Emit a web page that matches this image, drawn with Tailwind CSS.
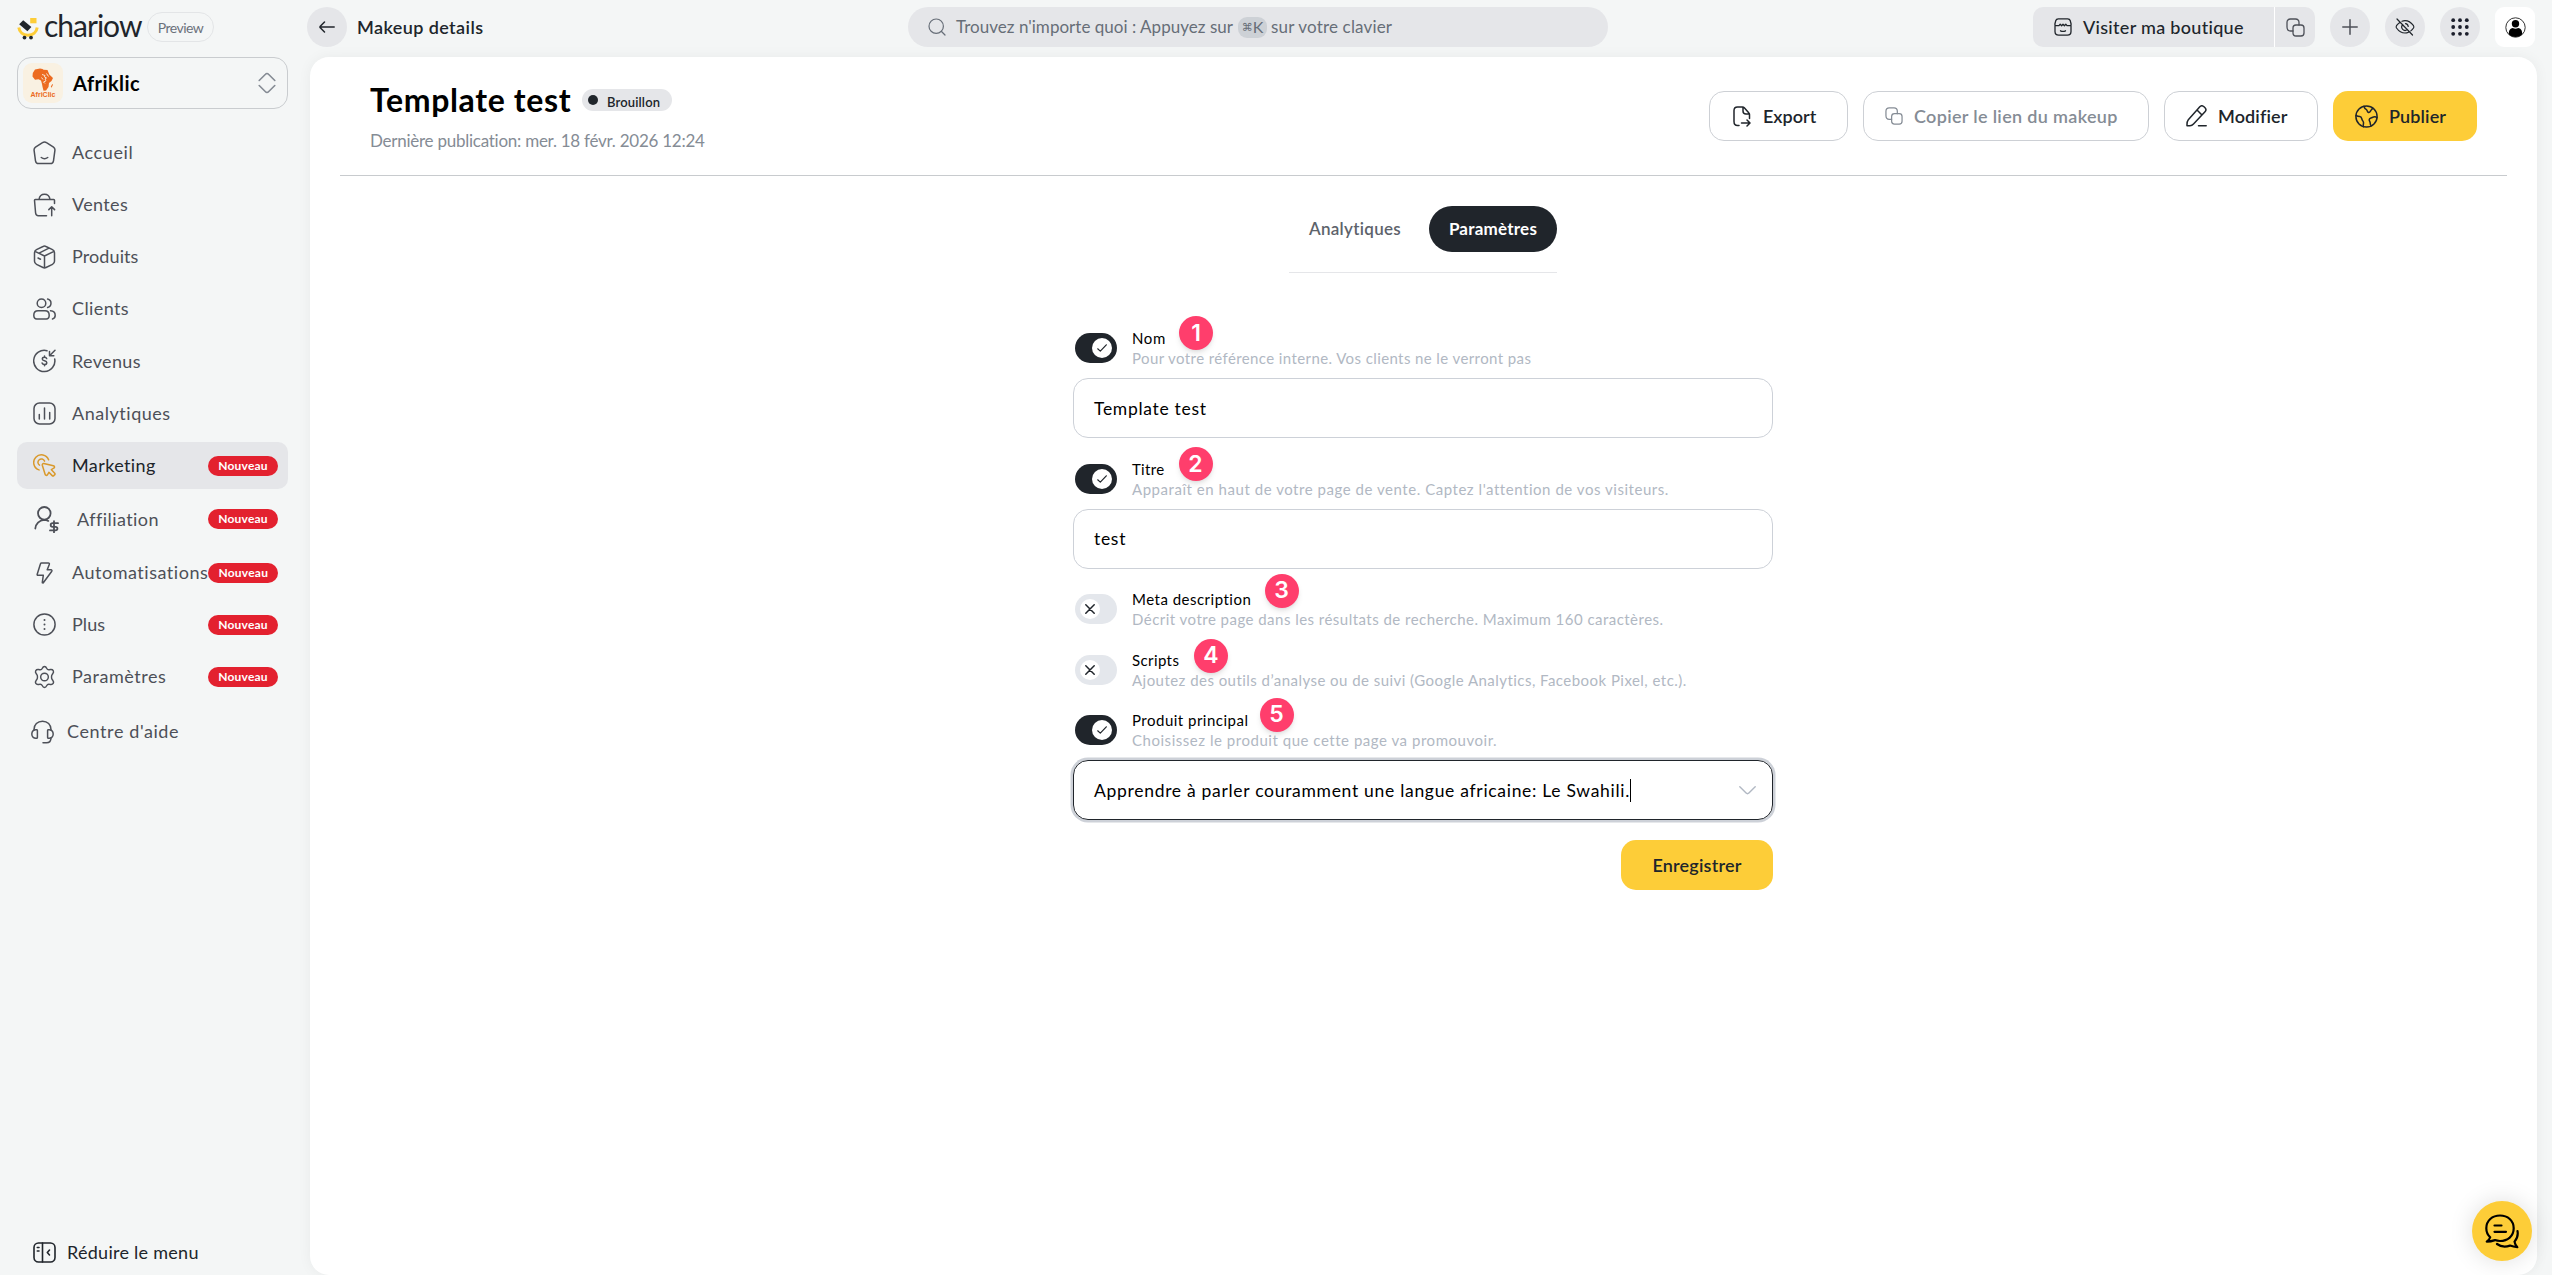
<!DOCTYPE html>
<html lang="fr">

<head>
    <meta charset="UTF-8">
    <meta name="viewport" content="width=device-width, initial-scale=1.0">
    <title>Makeup details - Chariow</title>
    <script src="https://cdn.jsdelivr.net/npm/@tailwindcss/browser@4"></script>
</head>

<body class="bg-[#f4f6f6] h-screen overflow-hidden flex font-['Lato','Noto_Sans',sans-serif] text-[#20252b] whitespace-nowrap">

    <!-- Sidebar -->
    <aside class="w-[307px] shrink-0 flex flex-col pl-[17px] pr-[19px]">
        <div class="h-[57px] pt-[12px] flex items-start">
            <svg class="w-[22px] h-[24px] mt-[5px] shrink-0" viewBox="0 0 22 24" fill="none">
                <path d="M1.8 10.5c.6 4.600 4.300 7.800 9.200 7.800s8.600-3.200 9.200-7.800" stroke="#fdcd38" stroke-width="3" />
                <path d="M6.200 3.200l8.200 6.800-4 4.300-8.200-7z" fill="#20252b" />
                <rect x="13.200" y="1" width="6.300" height="5.300" fill="#fdcd38" />
                <circle cx="7.500" cy="20.600" r="1.900" fill="#20252b" />
                <circle cx="14" cy="20.600" r="1.900" fill="#20252b" />
            </svg>
            <span class="ml-[5px] w-[98px] text-[30px] leading-[30px] tracking-[-1px] -mt-[2px]">chariow</span>
            <span class="ml-[5px] w-[67px] h-[30px] rounded-full border border-[#e3e5e7] flex items-center justify-center text-[14px] tracking-[-0.5px] text-[#6b717b]">Preview</span>
        </div>

        <div class="h-[52px] border border-[#c9cccf] rounded-[14px] flex items-center pl-[5px] pr-[11px]">
            <div class="w-[40px] h-[40px] rounded-[9px] bg-[#f9f1e2] flex flex-col items-center pt-[5px]">
                <svg class="w-[22px] h-[23px] shrink-0" viewBox="0 0 22 23" fill="#ec6b21">
                    <path d="M3 1.500L8 .500l2.500.500 1 .800 4 .200 1.800 4.500L21 10l-1.500 3-2.500 2-.500 4-2.500 3.500-2.500.300-1-4-.500-2.800-1-3.500-2.500-1.200-3.500.500L.500 8.500.800 5z" />
                    <path d="M10 6.500l3 1-.500 1.500 2 1-1.500 1 1 1.800-2.500 1.200 1.500 1.500M14.500 5.500l2 3M9.500 9.500l1.500 2" stroke="#f9f1e2" stroke-width=".9" fill="none" />
                    <path d="M20.300 16l.700.800-1.500 3-.700-1z" />
                </svg>
                <span class="text-[7px] leading-[8px] font-bold text-[#ec6b21] font-['Liberation_Sans',sans-serif]">AfriClic</span>
            </div>
            <span class="ml-[10px] text-[20px] font-bold tracking-[0.45px] text-black">Afriklic</span>
            <svg class="ml-auto w-[18px] h-[22px]" viewBox="0 0 18 22" fill="none" stroke="#858b94" stroke-width="1.600" stroke-linecap="round" stroke-linejoin="round">
                <path d="M1.200 8.500L7.500 2.200c.8-.9 2.200-.9 3 0l6.300 6.300M1.200 13.500l6.300 6.300c.8.900 2.200.9 3 0l6.300-6.300" />
            </svg>
        </div>

        <nav class="mt-[20px] flex flex-col gap-[5px] text-[18px] text-[#4d5058]">
            <a class="h-[47px] w-[271px] flex items-center pl-[16px]">
                <svg class="w-[23px] h-[24px] shrink-0" viewBox="0 0 23 24" fill="none" stroke="currentColor" stroke-width="1.500" stroke-linecap="round" stroke-linejoin="round"><path d="M9.500 1.600Q11.500.200 13.500 1.600L20.500 6.200Q22.200 7.400 21.900 9.400L20.500 19.800Q20 22.600 17.500 22.600H5.500Q3 22.600 2.500 19.800L1.100 9.400Q.800 7.400 2.500 6.200zM8.300 16.500q3.200 2.400 6.400 0" /></svg>
                <span class="ml-[16px] tracking-[0.6px]">Accueil</span>
            </a>
            <a class="h-[47px] w-[271px] flex items-center pl-[16px]">
                <svg class="w-[23px] h-[24px] shrink-0" viewBox="0 0 23 24" fill="none" stroke="currentColor" stroke-width="1.500" stroke-linecap="round" stroke-linejoin="round"><path d="M21.500 10.500V7.300q0-.8-.8-.8H2.300q-.8 0-.8.800L2.600 20q.3 2.800 2.800 2.800H13.500M6 6.300C6.500 3.200 8.800 1.200 11.500 1.200s5 2 5.500 5.100M18.700 22.800V14M15.800 16.600l2.900-2.900 2.900 2.900" /></svg>
                <span class="ml-[16px] tracking-[0.35px]">Ventes</span>
            </a>
            <a class="h-[47px] w-[271px] flex items-center pl-[16px]">
                <svg class="w-[23px] h-[24px] shrink-0" viewBox="0 0 23 24" fill="none" stroke="currentColor" stroke-width="1.500" stroke-linecap="round" stroke-linejoin="round"><path d="M10 1.500q1.500-.8 3 0l6.500 3.200q2 1 2 3v8.600q0 2-2 3L13 22.500q-1.500.8-3 0l-6.500-3.200q-2-1-2-3V7.700q0-2 2-3zM2 6.300L11.500 11 21 6.300M11.500 11v12M6 8.200L16 3.200M5 13l2.500 1.200" /></svg>
                <span class="ml-[16px] tracking-[0.1px]">Produits</span>
            </a>
            <a class="h-[47px] w-[271px] flex items-center pl-[16px]">
                <svg class="w-[23px] h-[22px] shrink-0" viewBox="0 0 23 22" fill="none" stroke="currentColor" stroke-width="1.500" stroke-linecap="round" stroke-linejoin="round"><circle cx="8.500" cy="5.300" r="4.300" /><path d="M14.600 1.100a4.300 4.300 0 0 1 0 8.400M.800 17.300c0-2.900 2-4.500 4.200-4.500h7c2.200 0 4.200 1.600 4.200 4.500 0 2.200-1.200 3.700-3 3.700H3.800c-1.800 0-3-1.500-3-3.700zM17.500 12.800c2.800.2 4.700 2 4.700 4.500 0 2-1 3.300-2.700 3.700" /></svg>
                <span class="ml-[16px] tracking-[0.4px]">Clients</span>
            </a>
            <a class="h-[48px] w-[271px] flex items-center pl-[16px]">
                <svg class="w-[23px] h-[24px] shrink-0" viewBox="0 0 23 24" fill="none" stroke="currentColor" stroke-width="1.500" stroke-linecap="round" stroke-linejoin="round"><path d="M14 1.700A10.600 10.600 0 1 0 21.700 10M22 1.300l-5.200 5.200M16.500 2.500v4.300h4.300M13.700 9.600c-.3-1-1.100-1.400-2.200-1.400-1.300 0-2.200.7-2.200 1.700 0 2.600 4.500 1.200 4.500 3.800 0 1.100-1 1.800-2.300 1.800-1.200 0-2.100-.5-2.400-1.500M11.500 7v1.200M11.500 15.500v1.300" /></svg>
                <span class="ml-[16px] tracking-[0.35px]">Revenus</span>
            </a>
            <a class="h-[47px] w-[271px] flex items-center pl-[16px]">
                <svg class="w-[23px] h-[23px] shrink-0" viewBox="0 0 23 23" fill="none" stroke="currentColor" stroke-width="1.500" stroke-linecap="round" stroke-linejoin="round"><rect x="1" y="1" width="21" height="21" rx="5.500" /><path d="M6.300 12.500V17M11.500 6v11M16.700 10.500V17" /></svg>
                <span class="ml-[16px] tracking-[0.53px]">Analytiques</span>
            </a>
            <a class="h-[47px] w-[271px] flex items-center pl-[16px] pr-[10px] bg-[#e5e6e9] rounded-[10px] text-[#20252b]">
                <svg class="w-[23px] h-[23px] shrink-0" viewBox="0 0 23 23" fill="none" stroke="#d9992c" stroke-width="1.500" stroke-linecap="round" stroke-linejoin="round"><path d="M15.600 5.800A7.700 7.700 0 1 0 6 15.900M11.500 7.100A3.400 3.400 0 1 0 6.500 11.200M10.800 9.600l9.600 2.200c1.300.3 1.500 1.600.5 2.200l-2.500 1.700 3.300 3.500c.5.600.4 1.200-.1 1.600l-.8.800c-.5.500-1.100.5-1.600 0l-3.300-3.300-1.500 2.500c-.7 1-2 .7-2.300-.5L9.300 11.200c-.2-1 .5-1.800 1.500-1.600z" /></svg>
                <span class="ml-[16px] tracking-[0.4px]">Marketing</span>
                <span class="ml-auto w-[70px] h-[20px] rounded-full bg-[#e3212f] flex items-center justify-center text-[12px] font-bold tracking-[0.23px] text-white">Nouveau</span>
            </a>
            <a class="h-[50px] w-[271px] flex items-center pl-[17px] pr-[10px]">
                <svg class="w-[26px] h-[27px] shrink-0" viewBox="0 0 26 27" fill="none" stroke="currentColor" stroke-width="1.800" stroke-linecap="round" stroke-linejoin="round"><circle cx="10.300" cy="7.300" r="6.300" /><path d="M1.300 22.500c.3-4.700 4-8.300 8.700-8.700 2 0 3.200.4 4.300 1.100M24 17.200h-5.300c-2.700 0-2.700 3.600 0 3.600h2.700c2.700 0 2.700 3.600 0 3.600H16M20 15.200v11.200" /></svg>
                <span class="ml-[17px] tracking-[0.44px]">Affiliation</span>
                <span class="ml-auto w-[70px] h-[20px] rounded-full bg-[#e3212f] flex items-center justify-center text-[12px] font-bold tracking-[0.23px] text-white">Nouveau</span>
            </a>
            <a class="h-[47px] w-[271px] flex items-center pl-[16px] pr-[10px]">
                <svg class="w-[23px] h-[22px] shrink-0" viewBox="0 0 23 22" fill="none" stroke="currentColor" stroke-width="1.500" stroke-linecap="round" stroke-linejoin="round"><path d="M8.500 1h6.800c.9 0 1.300.7 1 1.400L14.200 7.800H18c.8 0 1.200.8.800 1.400L10.300 20.700c-.4.500-1.100.2-1-.4l1-7H5c-.7 0-1-.5-.8-1.100L7.500 1.700c.2-.5.500-.7 1-.7z" /></svg>
                <span class="ml-[16px] tracking-[0.52px]">Automatisations</span>
                <span class="ml-auto w-[70px] h-[20px] shrink-0 rounded-full bg-[#e3212f] flex items-center justify-center text-[12px] font-bold tracking-[0.23px] text-white">Nouveau</span>
            </a>
            <a class="h-[47px] w-[271px] flex items-center pl-[16px] pr-[10px]">
                <svg class="w-[23px] h-[23px] shrink-0" viewBox="0 0 23 23" fill="none" stroke="currentColor" stroke-width="1.500" stroke-linecap="round"><circle cx="11.500" cy="11.500" r="10.600" /><path d="M11.500 7v.100M11.500 11.500v.100M11.500 16v.100" stroke-width="2" /></svg>
                <span class="ml-[16px] tracking-[0.1px]">Plus</span>
                <span class="ml-auto w-[70px] h-[20px] rounded-full bg-[#e3212f] flex items-center justify-center text-[12px] font-bold tracking-[0.23px] text-white">Nouveau</span>
            </a>
            <a class="h-[47px] w-[271px] flex items-center pl-[16px] pr-[10px]">
                <svg class="w-[23px] h-[24px] shrink-0" viewBox="0 0 24 24" fill="none" stroke="currentColor" stroke-width="1.500" stroke-linecap="round" stroke-linejoin="round"><circle cx="12" cy="12" r="4" /><path d="M9.600 3.100C10.300 1.500 10.900 1 12 1s1.700.5 2.400 2.100c.5 1.100 1.500 1.600 2.700 1.300l1-.2c1.500-.3 2.400.1 3 1.100s.5 2-.5 3.300l-.6.800c-.9 1.100-.9 4.100 0 5.200l.6.800c1 1.300 1.100 2.300.5 3.300s-1.500 1.400-3 1.100l-1-.2c-1.200-.3-2.200.2-2.700 1.300C13.700 22.500 13.100 23 12 23s-1.700-.5-2.400-2.100c-.5-1.100-1.500-1.600-2.700-1.300l-1 .2c-1.500.3-2.400-.1-3-1.100s-.5-2 .5-3.300l.6-.8c.9-1.100.9-4.100 0-5.200l-.6-.8c-1-1.300-1.100-2.300-.5-3.300s1.500-1.400 3-1.100l1 .2c1.200.3 2.200-.2 2.700-1.300z" /></svg>
                <span class="ml-[16px] tracking-[0.54px]">Paramètres</span>
                <span class="ml-auto w-[70px] h-[20px] rounded-full bg-[#e3212f] flex items-center justify-center text-[12px] font-bold tracking-[0.23px] text-white">Nouveau</span>
            </a>
        </nav>

        <a class="mt-[8px] h-[47px] flex items-center pl-[14px] text-[18px] text-[#4d5058]">
            <svg class="w-[23px] h-[24px] shrink-0" viewBox="0 0 23 24" fill="none" stroke="currentColor" stroke-width="1.500" stroke-linecap="round" stroke-linejoin="round"><path d="M3 10V9.500C3 4.800 6.500 1.200 11.500 1.200S20 4.800 20 9.500V10M20 18c0 3-1.800 4.800-4.600 4.800H12" /><path d="M5.800 9.800c-3-.5-5 1.300-5 4.200s2 4.700 5 4.200c.4-.1.600-.4.600-.8v-6.800c0-.4-.2-.700-.6-.8zM17.200 9.800c3-.5 5 1.300 5 4.200s-2 4.700-5 4.200c-.4-.1-.6-.4-.6-.8v-6.800c0-.4.2-.700.6-.8z" /></svg>
            <span class="ml-[13px] tracking-[0.6px]">Centre d'aide</span>
        </a>

        <a class="mt-auto h-[45px] flex items-center pl-[16px] text-[18px]">
            <svg class="w-[23px] h-[21px] shrink-0" viewBox="0 0 23 21" fill="none" stroke="currentColor" stroke-width="1.600" stroke-linecap="round" stroke-linejoin="round"><rect x="1" y="1" width="21" height="19" rx="4.500" /><path d="M9.500 1v19M4.300 5.500H6M4.300 9H6M16.500 8l-2.200 2.500 2.200 2.500" /></svg>
            <span class="ml-[11px] tracking-[0.27px]">Réduire le menu</span>
        </a>
    </aside>

    <div class="flex-1 flex flex-col">
        <!-- Top bar -->
        <header class="h-[57px] pt-[7px] pr-[17px] flex items-start shrink-0">
            <div class="w-[601px] flex items-center gap-[10px]">
                <span class="w-[40px] h-[40px] rounded-full bg-[#e5e6e9] flex items-center justify-center">
                    <svg class="w-[16px] h-[12px]" viewBox="0 0 16 12" fill="none" stroke="currentColor" stroke-width="1.500" stroke-linecap="round" stroke-linejoin="round"><path d="M15.200 6H1M5.500 1L1.300 5.200c-.4.500-.4 1.100 0 1.600L5.500 11" /></svg>
                </span>
                <span class="text-[18px] font-semibold tracking-[0.4px]">Makeup details</span>
            </div>
            <div class="w-[700px] h-[40px] rounded-full bg-[#e5e6e9] flex items-center pl-[20px] text-[17px] text-[#676e78]">
                <svg class="w-[18px] h-[18px] shrink-0" viewBox="0 0 18 18" fill="none" stroke="currentColor" stroke-width="1.200" stroke-linecap="round"><circle cx="8.200" cy="8.200" r="7.200" /><path d="M13.500 13.500l3.500 3.500" /></svg>
                <span class="ml-[10px] w-[282px] tracking-[0.03px]">Trouvez n'importe quoi : Appuyez sur</span>
                <kbd class="w-[29px] h-[21px] rounded-[9px] bg-[#cdd1d6] flex items-center justify-center font-['Lato','DejaVu_Sans',sans-serif] text-[16px]"><span class="text-[11px]">⌘</span>K</kbd>
                <span class="ml-[4px] tracking-[0.17px]">sur votre clavier</span>
            </div>
            <div class="ml-auto flex gap-[15px]">
                <div class="flex h-[40px] rounded-[10px] bg-[#e5e6e9]">
                    <div class="w-[241px] flex items-center pl-[21px]">
                        <svg class="w-[18px] h-[18px]" viewBox="0 0 18 18" fill="none" stroke="currentColor" stroke-width="1.300" stroke-linecap="round" stroke-linejoin="round"><path d="M1 7.500v6Q1 17.200 4.700 17.200h8.600Q17 17.200 17 13.500v-6M4.300.800h9.400q2 0 2.600 2l.8 3.200c.2 1-.5 1.700-1.500 1.700H13l-1.200-1.500-1.400 1.500L9 6.200 7.600 7.700 6.200 6.200 5 7.700H2.400C1.400 7.700.700 7 .900 6l.8-3.200q.6-2 2.600-2zM6.500 12.800q2.500 1.300 5 0" /></svg>
                        <span class="ml-[11px] text-[18px] font-medium tracking-[0.3px]">Visiter ma boutique</span>
                    </div>
                    <div class="w-[41px] border-l border-white flex items-center pl-[11px]">
                        <svg class="w-[19px] h-[19px]" viewBox="0 0 19 19" fill="none" stroke="#4d5058" stroke-width="1.300" stroke-linecap="round" stroke-linejoin="round"><rect x="7" y="7" width="11" height="11" rx="3" /><path d="M13 7V4.500Q13 1 9.500 1h-5Q1 1 1 4.500v4.500Q1 13 4.500 13H7" /></svg>
                    </div>
                </div>
                <span class="w-[40px] h-[40px] rounded-full bg-[#e5e6e9] flex items-center justify-center">
                    <svg class="w-[16px] h-[16px]" viewBox="0 0 16 16" stroke="#4d5058" stroke-width="1.500" stroke-linecap="round"><path d="M8 .800v14.400M.800 8h14.400" /></svg>
                </span>
                <span class="w-[40px] h-[40px] rounded-full bg-[#e5e6e9] flex items-center justify-center">
                    <svg class="w-[20px] h-[18px]" viewBox="0 0 20 18" fill="none" stroke="currentColor" stroke-width="1.200" stroke-linecap="round" stroke-linejoin="round"><path d="M2 1l15.500 16M7 3.300c1-.4 2-.6 3-.6 3.800 0 6.500 2.300 8.500 5 .5.800.5 1.500 0 2.300-.8 1.100-1.700 2.100-2.700 2.900M4.500 4.700C3.300 5.500 2.300 6.500 1.500 7.700c-.5.800-.5 1.500 0 2.300 2 2.800 4.700 5 8.500 5 1.300 0 2.500-.300 3.500-.8M7.800 6.700a3.200 3.200 0 0 0 4.500 4.700M10.500 5.700a3.200 3.200 0 0 1 2.700 2.800" /></svg>
                </span>
                <span class="w-[40px] h-[40px] rounded-full bg-[#e5e6e9] flex items-center justify-center">
                    <svg class="w-[18px] h-[18px]" viewBox="0 0 18 18" fill="#1b1e2b"><circle cx="2.200" cy="2.200" r="1.900" /><circle cx="9" cy="2.200" r="1.900" /><circle cx="15.800" cy="2.200" r="1.900" /><circle cx="2.200" cy="9" r="1.900" /><circle cx="9" cy="9" r="1.900" /><circle cx="15.800" cy="9" r="1.900" /><circle cx="2.200" cy="15.800" r="1.900" /><circle cx="9" cy="15.800" r="1.900" /><circle cx="15.800" cy="15.800" r="1.900" /></svg>
                </span>
                <span class="w-[40px] h-[40px] rounded-[9px] bg-white flex items-center justify-center">
                    <svg class="w-[21px] h-[21px]" viewBox="0 0 21 21"><circle cx="10.500" cy="10.500" r="9.700" fill="none" stroke="#333" stroke-width="1" /><circle cx="10.500" cy="6.800" r="3.700" /><path d="M3.800 17.300c-.3-4 1.700-6 4-6.300q2.700 1.500 5.400 0c2.300.3 4.300 2.300 4 6.300-3.500 3.700-9.900 3.700-13.400 0z" /></svg>
                </span>
            </div>
        </header>

        <!-- Page panel -->
        <main class="relative flex-1 ml-[3px] mr-[15px] bg-white rounded-[19px] shadow-[0_0_14px_rgba(0,0,0,0.05)] flex flex-col">
            <div class="ml-[30px] mr-[30px] pl-[30px] pr-[30px] h-[119px] border-b border-[#c8cbce] flex justify-between shrink-0">
                <div class="pt-[22px]">
                    <div class="flex items-center">
                        <h1 class="w-[202px] text-[32px] leading-[42px] font-bold tracking-[0.65px] text-black">Template test</h1>
                        <span class="ml-[10px] w-[90px] h-[22px] rounded-full bg-[#e5e6e9] flex items-center pl-[6px]">
                            <span class="w-[10px] h-[10px] rounded-full bg-[#20252b]"></span>
                            <span class="ml-[9px] mt-[5px] text-[13px] font-semibold tracking-[0.14px]">Brouillon</span>
                        </span>
                    </div>
                    <p class="mt-[8px] text-[17px] leading-[24px] tracking-[-0.25px] text-[#858c95]">Dernière publication: mer. 18 févr. 2026 12:24</p>
                </div>
                <div class="pt-[34px] flex gap-[15px] text-[18px] font-semibold">
                    <button class="w-[139px] h-[50px] rounded-[15px] border border-[#cdd0d5] flex items-center pl-[23px]">
                        <svg class="w-[18px] h-[21px]" viewBox="0 0 18 21" fill="none" stroke="currentColor" stroke-width="1.500" stroke-linecap="round" stroke-linejoin="round"><path d="M16.500 12.500V8.500q0-1-.8-1.800L11.300 1.800Q10.600 1 9.500 1H4.500Q1 1 1 4.500v11Q1 19.500 4.500 19.500H6M10 1.200V5q0 3 3 3h3.300M8.500 17h8M14 14l3 3-3 3" /></svg>
                        <span class="ml-[12px]">Export</span>
                    </button>
                    <button class="w-[286px] h-[50px] rounded-[15px] border border-[#cdd0d5] flex items-center pl-[21px] text-[#858c95]">
                        <svg class="w-[18px] h-[18px]" viewBox="0 0 19 19" fill="none" stroke="currentColor" stroke-width="1.300" stroke-linecap="round" stroke-linejoin="round"><rect x="7" y="7" width="11" height="11" rx="3" /><path d="M13 7V4.500Q13 1 9.500 1h-5Q1 1 1 4.500v4.500Q1 13 4.500 13H7" /></svg>
                        <span class="ml-[11px] tracking-[0.33px]">Copier le lien du makeup</span>
                    </button>
                    <button class="w-[154px] h-[50px] rounded-[15px] border border-[#cdd0d5] flex items-center pl-[21px]">
                        <svg class="w-[21px] h-[22px]" viewBox="0 0 21 22" fill="none" stroke="currentColor" stroke-width="1.500" stroke-linecap="round" stroke-linejoin="round"><path d="M12.500 3.300l1.300-1.500c1.200-1.300 3-1.100 4.200 0l1 1c1.100 1.100 1.200 2.700 0 4L7.500 19q-1.500 1.700-3.500 1.700H1q-.2-4.200 1.300-6zM11 5l5 5M12.500 20.800h7.700" /></svg>
                        <span class="ml-[11px] tracking-[0.11px]">Modifier</span>
                    </button>
                    <button class="w-[144px] h-[50px] rounded-[15px] bg-[#fdcd38] flex items-center pl-[22px]">
                        <svg class="w-[23px] h-[23px]" viewBox="0 0 23 23" fill="none" stroke="currentColor" stroke-width="1.500" stroke-linecap="round" stroke-linejoin="round"><circle cx="11.500" cy="11.500" r="10.600" /><path d="M9 1.300c.3 1.500.8 2.300 2.200 3C12.500 5 11.800 7 13.500 7.500c1.700.4 2-2.200 3.300-3.300.5-.4 1-.7 1.500-.8M1 10.500c1.500.8 2.500 1 3.800 1 1.800.2 1.800 1.800 2.200 3 .5 1.500 1.800 1.800 1.500 3.700-.1 1.300-.5 2.800 0 3.600M22 12.500c-1.500-1-3.200-.8-4.800 0-1.500.8-3 .6-3 2.300 0 1.500 1 1.700 1 3.200 0 1 .2 2.200 1 2.800" /></svg>
                        <span class="ml-[11px] tracking-[0.13px]">Publier</span>
                    </button>
                </div>
            </div>

            <div class="mt-[30px] self-center w-[268px] h-[67px] mr-[1px] border-b border-[#e5e6e9] flex text-[17px] shrink-0">
                <span class="w-[140px] h-[46px] flex items-center pl-[20px] font-semibold tracking-[0.3px] text-[#5d636b]">Analytiques</span>
                <span class="w-[128px] h-[46px] rounded-full bg-[#20252b] flex items-center justify-center font-bold tracking-[0.23px] text-white">Paramètres</span>
            </div>

            <form class="mt-[55px] mr-px self-center w-[700px] flex flex-col">
                <div class="relative h-[40px] flex items-center pl-[2px]">
                    <span class="w-[42px] h-[30px] rounded-full bg-[#20252b] flex items-center justify-end pr-[5px]">
                        <span class="w-[20px] h-[20px] rounded-full bg-white flex items-center justify-center">
                            <svg class="w-[10px] h-[8px]" viewBox="0 0 10 8" fill="none" stroke="#20252b" stroke-width="1.200" stroke-linecap="round" stroke-linejoin="round"><path d="M.700 4.800l2.600 2.300L9.300.800" /></svg>
                        </span>
                    </span>
                    <div class="ml-[15px] text-[15px] leading-[20px]">
                        <p class="tracking-[0.6px] text-black">Nom</p>
                        <p class="tracking-[0.4px] text-[#b1b8c3]">Pour votre référence interne. Vos clients ne le verront pas</p>
                    </div>
                    <span class="absolute left-[106px] top-[-12px] w-[34px] h-[34px] rounded-full bg-[#ff3e6c] shadow-md flex items-center justify-center font-['Inter',sans-serif] text-[23px] font-semibold text-white">1</span>
                </div>
                <div class="mt-[10px] h-[60px] rounded-[15px] border border-[#cdd1d8] flex items-center pl-[20px] pt-[2px] text-[17.5px] tracking-[0.7px] text-black">Template test</div>

                <div class="relative mt-[21px] h-[40px] flex items-center pl-[2px]">
                    <span class="w-[42px] h-[30px] rounded-full bg-[#20252b] flex items-center justify-end pr-[5px]">
                        <span class="w-[20px] h-[20px] rounded-full bg-white flex items-center justify-center">
                            <svg class="w-[10px] h-[8px]" viewBox="0 0 10 8" fill="none" stroke="#20252b" stroke-width="1.200" stroke-linecap="round" stroke-linejoin="round"><path d="M.700 4.800l2.600 2.300L9.300.800" /></svg>
                        </span>
                    </span>
                    <div class="ml-[15px] text-[15px] leading-[20px]">
                        <p class="tracking-[0.3px] text-black">Titre</p>
                        <p class="tracking-[0.54px] text-[#b1b8c3]">Apparaît en haut de votre page de vente. Captez l'attention de vos visiteurs.</p>
                    </div>
                    <span class="absolute left-[105.5px] top-[-12px] w-[34px] h-[34px] rounded-full bg-[#ff3e6c] shadow-md flex items-center justify-center font-['Inter',sans-serif] text-[23px] font-semibold text-white">2</span>
                </div>
                <div class="mt-[10px] h-[60px] rounded-[15px] border border-[#cdd1d8] flex items-center pl-[20px] pt-px text-[17.5px] tracking-[0.7px] text-black">test</div>

                <div class="relative mt-[20px] h-[40px] flex items-center pl-[2px]">
                    <span class="w-[42px] h-[30px] rounded-full bg-[#e4e7ec] flex items-center pl-[5px]">
                        <span class="w-[20px] h-[20px] rounded-full bg-white flex items-center justify-center">
                            <svg class="w-[10px] h-[10px]" viewBox="0 0 10 10" stroke="#20252b" stroke-width="1.500" stroke-linecap="round"><path d="M.800.800l8.400 8.400M9.200.800L.800 9.200" /></svg>
                        </span>
                    </span>
                    <div class="ml-[15px] text-[15px] leading-[20px]">
                        <p class="tracking-[0.49px] text-black">Meta description</p>
                        <p class="tracking-[0.47px] text-[#b1b8c3]">Décrit votre page dans les résultats de recherche. Maximum 160 caractères.</p>
                    </div>
                    <span class="absolute left-[191.5px] top-[-15.500px] w-[34px] h-[34px] rounded-full bg-[#ff3e6c] shadow-md flex items-center justify-center font-['Inter',sans-serif] text-[23px] font-semibold text-white">3</span>
                </div>

                <div class="relative mt-[21px] h-[40px] flex items-center pl-[2px]">
                    <span class="w-[42px] h-[30px] rounded-full bg-[#e4e7ec] flex items-center pl-[5px]">
                        <span class="w-[20px] h-[20px] rounded-full bg-white flex items-center justify-center">
                            <svg class="w-[10px] h-[10px]" viewBox="0 0 10 10" stroke="#20252b" stroke-width="1.500" stroke-linecap="round"><path d="M.800.800l8.400 8.400M9.200.800L.800 9.200" /></svg>
                        </span>
                    </span>
                    <div class="ml-[15px] text-[15px] leading-[20px]">
                        <p class="tracking-[0.4px] text-black">Scripts</p>
                        <p class="tracking-[0.46px] text-[#b1b8c3]">Ajoutez des outils d’analyse ou de suivi (Google Analytics, Facebook Pixel, etc.).</p>
                    </div>
                    <span class="absolute left-[121px] top-[-11.500px] w-[34px] h-[34px] rounded-full bg-[#ff3e6c] shadow-md flex items-center justify-center font-['Inter',sans-serif] text-[23px] font-semibold text-white">4</span>
                </div>

                <div class="relative mt-[20px] h-[40px] flex items-center pl-[2px]">
                    <span class="w-[42px] h-[30px] rounded-full bg-[#20252b] flex items-center justify-end pr-[5px]">
                        <span class="w-[20px] h-[20px] rounded-full bg-white flex items-center justify-center">
                            <svg class="w-[10px] h-[8px]" viewBox="0 0 10 8" fill="none" stroke="#20252b" stroke-width="1.200" stroke-linecap="round" stroke-linejoin="round"><path d="M.700 4.800l2.600 2.300L9.300.800" /></svg>
                        </span>
                    </span>
                    <div class="ml-[15px] text-[15px] leading-[20px]">
                        <p class="tracking-[0.49px] text-black">Produit principal</p>
                        <p class="tracking-[0.53px] text-[#b1b8c3]">Choisissez le produit que cette page va promouvoir.</p>
                    </div>
                    <span class="absolute left-[186.5px] top-[-12.500px] w-[34px] h-[34px] rounded-full bg-[#ff3e6c] shadow-md flex items-center justify-center font-['Inter',sans-serif] text-[23px] font-semibold text-white">5</span>
                </div>
                <div class="mt-[10px] h-[60px] rounded-[15px] border border-[#20252b] ring-[2.5px] ring-[#cdd1d8] flex items-center pl-[20px] pr-[16px] text-[17.5px] text-black">
                    <span class="pt-[2px] tracking-[0.7px]">Apprendre à parler couramment une langue africaine: Le Swahili.</span>
                    <span class="w-px h-[23px] bg-black"></span>
                    <svg class="ml-auto w-[17px] h-[9px]" viewBox="0 0 17 9" fill="none" stroke="#b1b8c3" stroke-width="1.400" stroke-linecap="round" stroke-linejoin="round"><path d="M.800.800l6.300 6.300c.8.800 2 .8 2.800 0L16.200.800" /></svg>
                </div>
                <button type="button" class="mt-[20px] self-end w-[152px] h-[50px] rounded-[15px] bg-[#fdcd38] text-[18px] font-semibold tracking-[0.2px]">Enregistrer</button>
            </form>
        </main>
    </div>

    <!-- Chat launcher -->
    <div class="fixed right-[20px] bottom-[14px] w-[60px] h-[60px] rounded-full bg-[#fdcd38] shadow-[0_0_24px_rgba(0,0,0,0.13)] flex items-center justify-center">
        <svg class="w-[34px] h-[35px]" viewBox="0 0 34 35" fill="none" stroke="#000" stroke-width="2.200" stroke-linecap="round" stroke-linejoin="round">
            <path d="M5.200 23.200C2.500 20.800 1.300 17.800 1.300 14.300 1.300 6.500 7.300 1.500 15 1.500s13.700 5 13.700 12.800S22.700 27 15 27c-1.800 0-3.500-.3-5-.9-2.500.9-5 1.500-8.300 1.500 1.800-1.200 3-2.600 3.500-4.400zM9.500 11.500h7M9.500 17.800h11.500M32.500 17c.8 4.500-.3 7.800-3 10.700.3 2 1.200 3.700 2.800 5.500-3-.2-5.300-.8-7.300-1.600-4.500 1.500-9.500 1-13-1.600" />
        </svg>
    </div>

</body>

</html>
